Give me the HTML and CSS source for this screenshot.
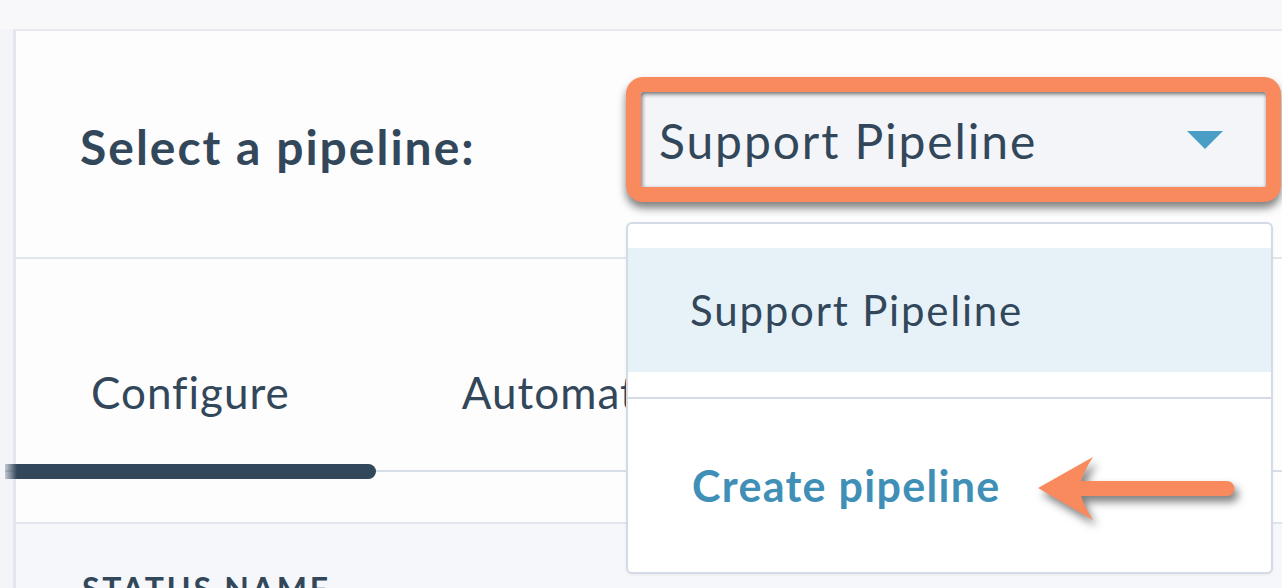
FILE: index.html
```html
<!DOCTYPE html>
<html lang="en">
<head>
<meta charset="utf-8">
<title>Select a pipeline</title>
<link rel="stylesheet" href="styles.css">
</head>
<body>
<div class="topstrip"></div>
<main class="panel">
  <header class="head">
    <h1 class="label">Select a pipeline:</h1>
    <div class="picker">
      <div class="select">
        <span class="select-value">Support Pipeline</span>
        <svg class="caret" width="36" height="18" viewBox="0 0 36 18" aria-hidden="true"><path d="M0 0 H36 L18 18 Z" fill="#4a9ec6"/></svg>
      </div>
      <div class="menu">
        <div class="option selected">Support Pipeline</div>
        <div class="menu-sep"></div>
        <div class="option create">Create pipeline</div>
        <svg class="arrow" width="215" height="85" viewBox="0 0 215 85" aria-hidden="true"><path d="M7 41 L62 10 Q53 24 50 34 L196 34 A7.5 7.5 0 0 1 196 49 L50 49 Q53 59 62 73 Z" fill="#f98a5e"/></svg>
      </div>
    </div>
  </header>
  <nav class="tabs">
    <div class="tab active">Configure</div>
    <div class="tab">Automate</div>
  </nav>
  <div class="tabs-gap"></div>
  <section class="table">
    <div class="th">STATUS NAME</div>
  </section>
</main>
</body>
</html>
```
FILE: styles.css
```css
* { box-sizing: border-box; }
html, body { margin: 0; padding: 0; }
body {
  background: #f4f5f9;
  font-family: Lato, "Open Sans", sans-serif;
  color: #33475b;
  width: 1282px;
  height: 588px;
  overflow: hidden;
}
.topstrip { height: 29px; background: #f8f8fb; }
.panel {
  margin-left: 13px;
  background: #fdfdfe;
  border-top: 2px solid #e6e9f0;
  border-left: 3px solid #e3e6ee;
  height: 559px;
  display: flex;
  flex-direction: column;
}
.head {
  display: flex;
  align-items: flex-start;
  flex: none;
  height: 228px;
  padding: 46px 1px 0 64px;
  border-bottom: 2px solid #e1e5ec;
}
.label {
  margin: 41px 0 0 0;
  font-size: 48px;
  line-height: 58px;
  font-weight: 700;
  letter-spacing: 2px;
  color: #33475b;
}
.picker {
  margin-left: auto;
  width: 655px;
  position: relative;
  z-index: 2;
}
.select {
  height: 125px;
  border: 15px solid #f88a5e;
  border-radius: 17px;
  background: #f4f5f9;
  box-shadow: inset 1px 2px 4px rgba(30,30,30,.65), 0 6px 8px rgba(0,0,0,.5);
  display: flex;
  align-items: center;
  padding: 0 43px 0 18px;
}
.select-value {
  flex: 1;
  font-size: 48px;
  line-height: 58px;
  font-weight: 400;
  letter-spacing: 1.9px;
  color: #33475b;
  margin-top: 2px;
}
.caret { display: block; }
.menu {
  position: absolute;
  top: 145px;
  left: 0;
  width: 647px;
  height: 352px;
  background: #ffffff;
  border: 2px solid #d3dbe6;
  border-radius: 6px;
  padding-top: 24px;
  display: flex;
  flex-direction: column;
  box-shadow: 0 1px 3px rgba(0,0,0,.06);
}
.option {
  padding-left: 62px;
  display: flex;
  align-items: center;
}
.option.selected {
  height: 124px;
  background: #e6f2f8;
  font-size: 42px;
  letter-spacing: 1.8px;
  color: #33475b;
}
.menu-sep {
  margin-top: 25px;
  border-top: 2px solid #d3dbe6;
}
.option.create {
  flex: 1;
  font-size: 43px;
  font-weight: 700;
  letter-spacing: 1.3px;
  color: #3f8fb7;
  padding-left: 64px;
}
.arrow {
  position: absolute;
  left: 403px;
  top: 223px;
  overflow: visible;
  filter: drop-shadow(4px 6px 4px rgba(0,0,0,.5));
}
.tabs {
  display: flex;
  flex: none;
  margin-left: -11px;
  border-bottom: 2px solid #d8dee7;
  position: relative;
  z-index: 1;
}
.tab {
  position: relative;
  padding: 107px 86px 51px 86px;
  font-size: 44px;
  line-height: 53px;
  letter-spacing: 1px;
  color: #33475b;
}
.tab.active::after {
  content: "";
  position: absolute;
  left: 0;
  right: 0;
  bottom: -9px;
  height: 15px;
  border-radius: 0 8px 8px 0;
  background: linear-gradient(to right, rgba(51,71,91,.25), #33475b 12px);
}
.tabs-gap {
  flex: none;
  height: 52px;
  border-bottom: 2px solid #e1e5ec;
}
.table {
  flex: 1;
  min-height: 0;
  overflow: hidden;
  background: #f5f7fa;
  padding: 46px 0 0 66px;
}
.th {
  font-size: 32px;
  line-height: 38px;
  font-weight: 700;
  letter-spacing: 2.8px;
  color: #33475b;
}
```
